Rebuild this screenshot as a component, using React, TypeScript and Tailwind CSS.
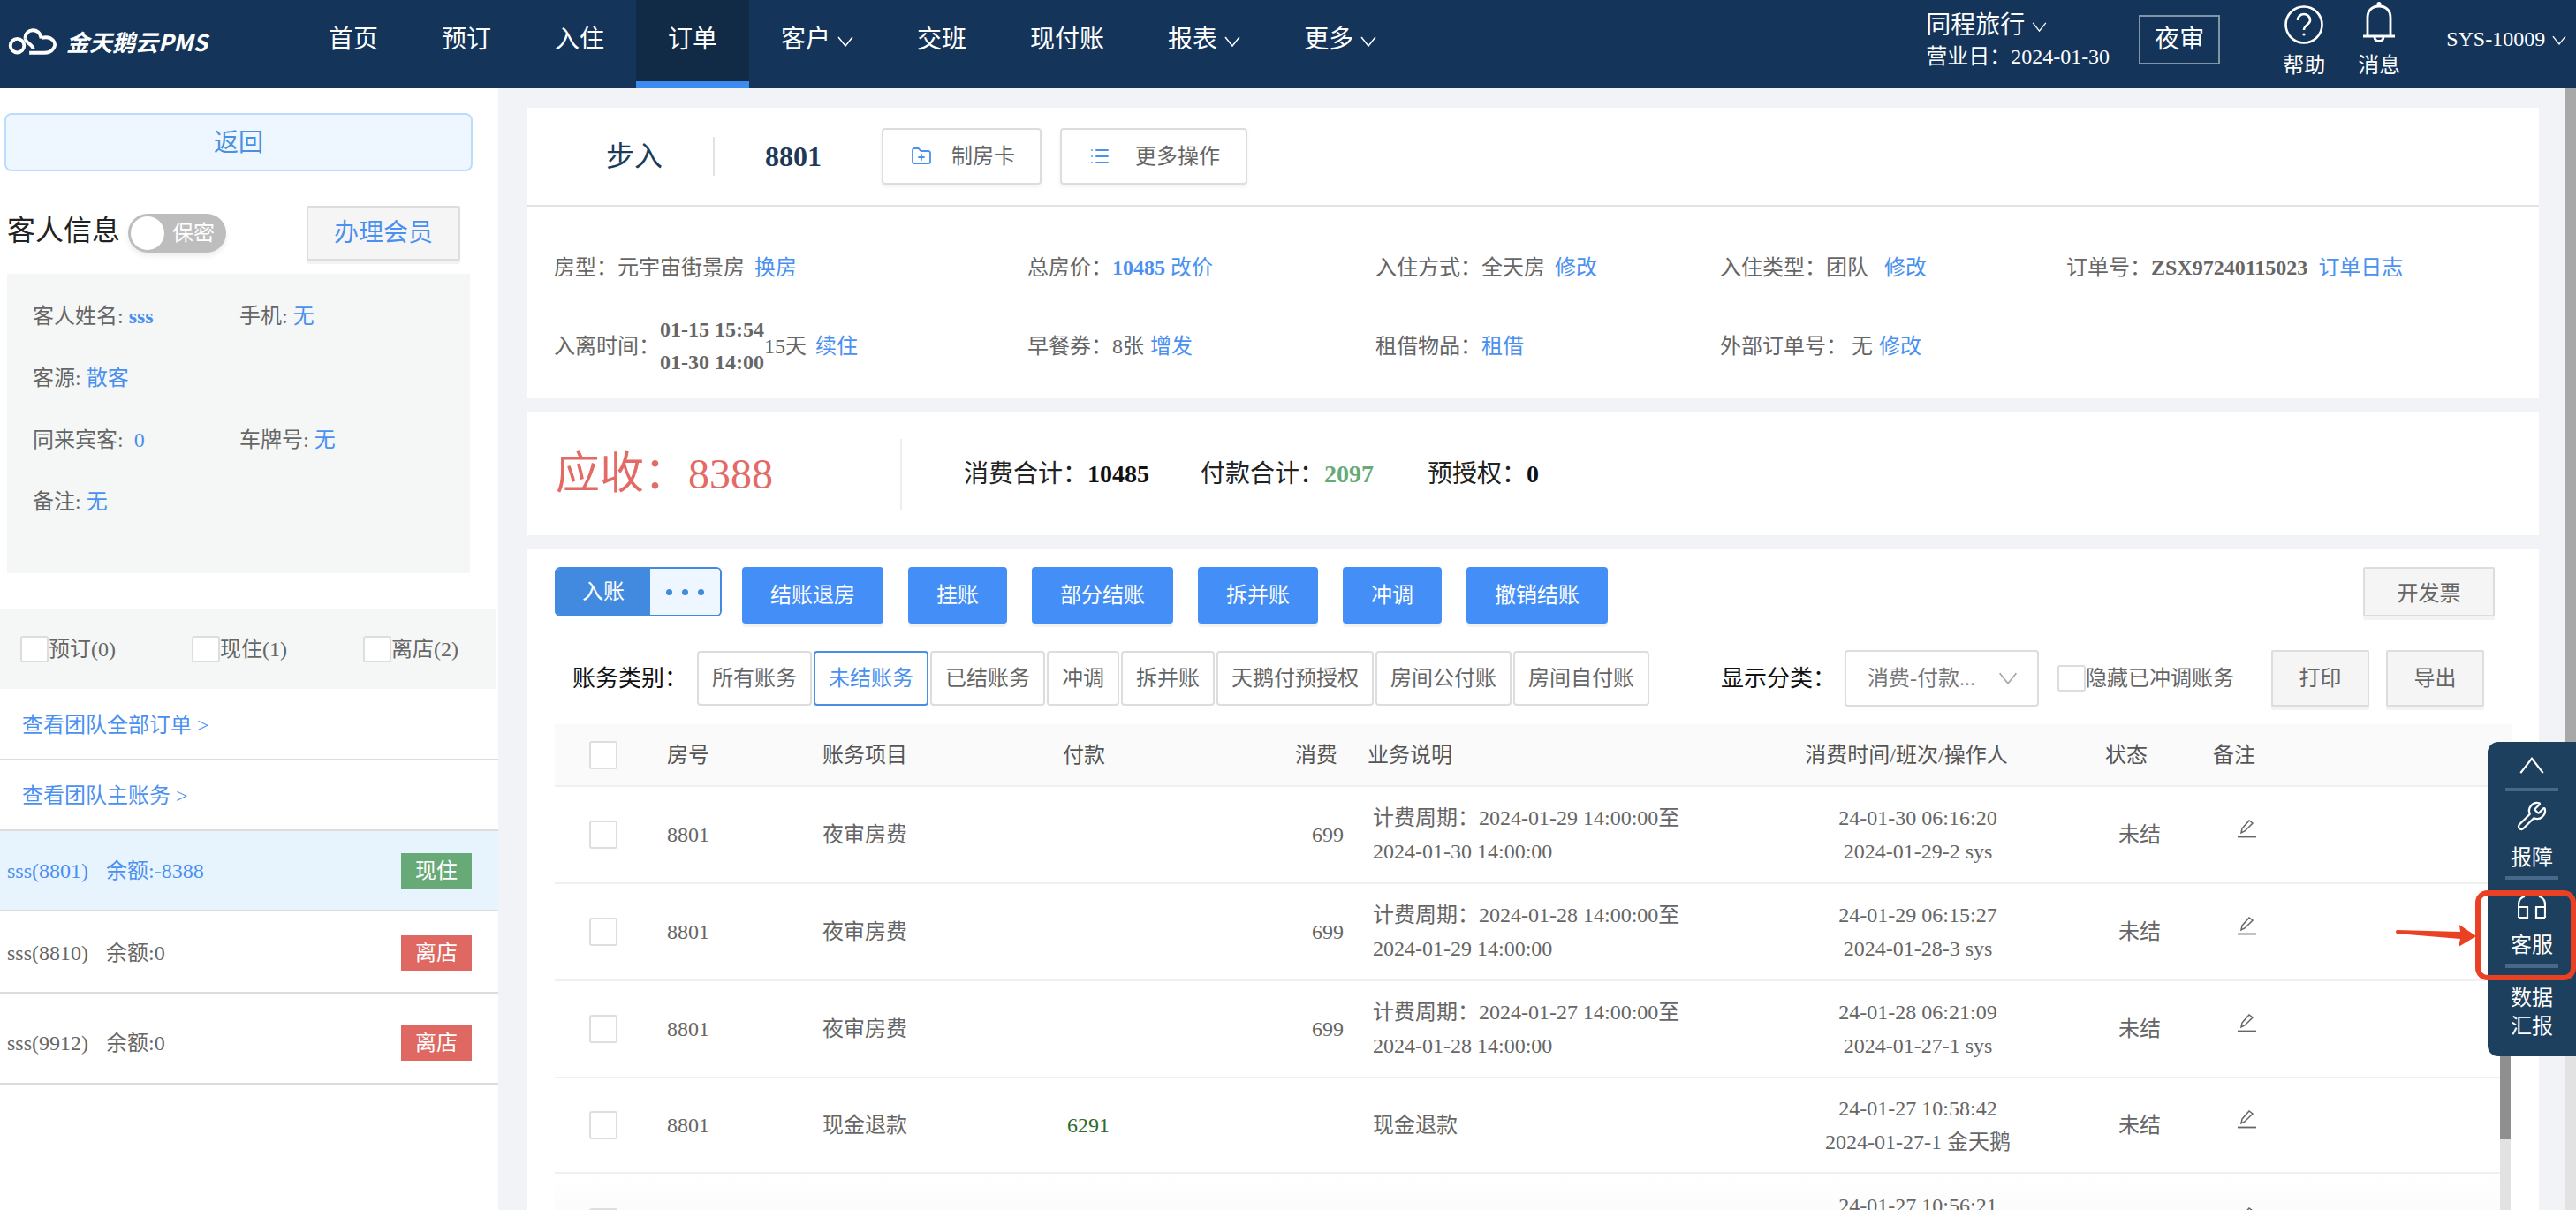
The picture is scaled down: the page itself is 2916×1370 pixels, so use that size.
import { FolderPlus, List, Wrench } from "lucide-react";

const navItems = [
  { label: "首页" },
  { label: "预订" },
  { label: "入住" },
  { label: "订单", active: true },
  { label: "客户", menu: true },
  { label: "交班" },
  { label: "现付账" },
  { label: "报表", menu: true },
  { label: "更多", menu: true },
];

const tabs = ["所有账务", "未结账务", "已结账务", "冲调", "拆并账", "天鹅付预授权", "房间公付账", "房间自付账"];
const actions = ["结账退房", "挂账", "部分结账", "拆并账", "冲调", "撤销结账"];

const rows = [
  { room: "8801", item: "夜审房费", fee: "699", desc: ["计费周期：2024-01-29 14:00:00至", "2024-01-30 14:00:00"], time: ["24-01-30 06:16:20", "2024-01-29-2 sys"], status: "未结" },
  { room: "8801", item: "夜审房费", fee: "699", desc: ["计费周期：2024-01-28 14:00:00至", "2024-01-29 14:00:00"], time: ["24-01-29 06:15:27", "2024-01-28-3 sys"], status: "未结" },
  { room: "8801", item: "夜审房费", fee: "699", desc: ["计费周期：2024-01-27 14:00:00至", "2024-01-28 14:00:00"], time: ["24-01-28 06:21:09", "2024-01-27-1 sys"], status: "未结" },
  { room: "8801", item: "现金退款", pay: "6291", desc: ["现金退款"], time: ["24-01-27 10:58:42", "2024-01-27-1 金天鹅"], status: "未结" },
  // last row is cut by the window, only its first time line shows
  { time: ["24-01-27 10:56:21", "\u00a0"] },
];

const tableCols = "grid grid-cols-[127px_176px_272px_145px_173px_479px_342px_138px_1fr]";

function Chevron({ className }: { className?: string }) {
  return (
    <svg viewBox="0 0 18 12" fill="none" stroke="currentColor" strokeWidth="1.5" className={className}>
      <path d="M1 1l8 10 8-10" />
    </svg>
  );
}

function Logo() {
  return (
    <div className="flex items-center pl-[9px]">
      <svg viewBox="25 25 170 105" fill="none" stroke="white" strokeWidth="12" className="w-[56px] h-[34px]">
        <circle cx="56" cy="95" r="24" />
        <path d="M84 70C82 35 135 28 140 70" />
        <path d="M140 68C178 58 200 88 180 108C172 120 160 120 150 120H98" />
        <path d="M84 70C86 88 112 90 112 108" />
      </svg>
      <span className="ml-[10px] font-['Noto_Sans_CJK_SC',sans-serif] font-bold italic text-[26px] text-white">
        金天鹅云PMS
      </span>
    </div>
  );
}

function Header() {
  return (
    <header className="h-[100px] bg-[#14345a] flex text-white shrink-0">
      <div className="w-[336px] flex items-center pb-[8px]">
        <Logo />
      </div>
      <nav className="flex">
        {navItems.map((n) => (
          <div
            key={n.label}
            className={
              n.active
                ? "h-full px-[36px] flex items-center pb-[2px] bg-[#112b47] border-b-[8px] border-[#3d8af0] text-[28px]"
                : "h-full px-[36px] flex items-center pb-[10px] text-[28px]"
            }
          >
            {n.label}
            {n.menu && <Chevron className="w-[18px] h-[12px] ml-[8px] mt-[4px]" />}
          </div>
        ))}
      </nav>
      <div className="ml-[586px] w-[241px] pt-[11px]">
        <div className="flex items-center text-[28px] leading-[36px]">
          同程旅行
          <Chevron className="w-[17px] h-[11px] ml-[8px] mt-[2px]" />
        </div>
        <div className="text-[24px] leading-[32px] mt-[1px]">营业日：2024-01-30</div>
      </div>
      <div className="mt-[17px] w-[92px] h-[56px] border-2 border-[#8094aa] flex items-center justify-center text-[28px]">
        夜审
      </div>
      <div className="ml-[63px] w-[64px] flex flex-col items-center pt-[6px]">
        <svg viewBox="0 0 44 44" fill="none" stroke="white" strokeWidth="2.6" className="w-[44px] h-[44px]">
          <circle cx="22" cy="22" r="20.5" />
          <path d="M15 17c0-4 3-7 7-7s7 3 7 7c0 5-7 5-7 11" />
          <circle cx="22" cy="33" r="1.6" fill="white" stroke="none" />
        </svg>
        <span className="text-[24px] leading-[30px] mt-[9px]">帮助</span>
      </div>
      <div className="ml-[21px] w-[64px] flex flex-col items-center pt-[1px]">
        <svg viewBox="0 0 36 48" fill="none" stroke="white" strokeWidth="2.8" className="w-[36px] h-[48px]">
          <path d="M5 39V19C5 10 11 6 18 6C25 6 31 10 31 19V39" />
          <path d="M0 40H36" />
          <path d="M13 41C13 47 23 47 23 41" />
          <circle cx="18" cy="3.5" r="2.6" fill="white" stroke="none" />
        </svg>
        <span className="text-[24px] leading-[30px] mt-[10px]">消息</span>
      </div>
      <div className="ml-[44px] flex items-center text-[24px] h-[88px]">
        SYS-10009
        <Chevron className="w-[16px] h-[11px] ml-[8px] mt-[2px]" />
      </div>
    </header>
  );
}

function Sidebar() {
  return (
    <aside className="w-[564px] bg-white shrink-0 text-[24px] text-[#666]">
      <div className="mt-[28px] mx-[5px] w-[530px] h-[66px] rounded-[8px] bg-[#eef7ff] border-2 border-[#bcdcfb] flex items-center justify-center pt-[2px] text-[28px] text-[#4a90e2]">
        返回
      </div>

      <div className="mt-[38px] pl-[8px] h-[64px] flex items-center">
        <span className="text-[32px] text-[#222] w-[128px] -mt-[6px]">客人信息</span>
        <div className="ml-[9px] w-[111px] h-[44px] rounded-full bg-[#bdbdbd] flex items-center pl-[3px] shadow-[0_4px_6px_#eeeeee]">
          <span className="w-[38px] h-[38px] rounded-full bg-white" />
          <span className="ml-[9px] text-white">保密</span>
        </div>
        <div className="ml-[91px] w-[174px] h-[62px] bg-[#f5f5f5] border-2 border-[#dddddd] rounded-[2px] shadow-[0_4px_0_#f3f3f3] flex items-center justify-center text-[28px] text-[#4a90f0]">
          办理会员
        </div>
      </div>

      <div className="mt-[14px] ml-[8px] w-[524px] h-[339px] bg-[#f5f7f7] pt-[13px] pl-[29px] grid grid-cols-[234px_1fr] auto-rows-[70px] items-center">
        <div>
          客人姓名: <b className="font-bold text-[#4a90f0]">sss</b>
        </div>
        <div>
          手机: <span className="text-[#4a90f0]">无</span>
        </div>
        <div className="col-span-2">
          客源: <span className="text-[#4a90f0]">散客</span>
        </div>
        <div>
          同来宾客:<span className="text-[#4a90f0] ml-[12px]">0</span>
        </div>
        <div>
          车牌号: <span className="text-[#4a90f0]">无</span>
        </div>
        <div className="col-span-2">
          备注: <span className="text-[#4a90f0]">无</span>
        </div>
      </div>

      <div className="mt-[40px] w-[562px] h-[91px] bg-[#f5f7f7] pl-[23px] grid grid-cols-[194px_194px_1fr] items-center">
        {["预订(0)", "现住(1)", "离店(2)"].map((s) => (
          <label key={s} className="flex items-center">
            <span className="w-[32px] h-[30px] bg-white border-2 border-[#dddddd] rounded-[3px]" />
            {s}
          </label>
        ))}
      </div>

      <div className="h-[81px] pl-[25px] pt-[2px] flex items-center border-b-2 border-[#dddddd] text-[#4a90f0]">查看团队全部订单 &gt;</div>
      <div className="h-[80px] pl-[25px] pt-[2px] flex items-center border-b-2 border-[#dddddd] text-[#4a90f0]">查看团队主账务 &gt;</div>

      <div className="h-[91px] pl-[8px] pr-[30px] flex items-center border-b-2 border-[#dddddd] bg-[#e8f4fd] text-[#4a90f0]">
        <span className="w-[112px]">sss(8801)</span>
        余额:-8388
        <span className="ml-auto w-[80px] h-[40px] bg-[#68a978] text-white flex items-center justify-center">现住</span>
      </div>
      <div className="h-[93px] pl-[8px] pr-[30px] pt-[2px] flex items-center border-b-2 border-[#dddddd]">
        <span className="w-[112px]">sss(8810)</span>
        余额:0
        <span className="ml-auto w-[80px] h-[40px] bg-[#e06862] text-white flex items-center justify-center">离店</span>
      </div>
      <div className="h-[103px] pl-[8px] pr-[30px] pt-[10px] flex items-center border-b-2 border-[#dddddd]">
        <span className="w-[112px]">sss(9912)</span>
        余额:0
        <span className="ml-auto w-[80px] h-[40px] bg-[#e06862] text-white flex items-center justify-center">离店</span>
      </div>
    </aside>
  );
}

function Link({ children, className }: { children: string; className?: string }) {
  return <span className={`text-[#4a90f0] ${className ?? ""}`}>{children}</span>;
}

function OrderCard() {
  return (
    <section className="h-[329px] bg-white shrink-0">
      <div className="h-[110px] flex items-center border-b-2 border-[#e3e3e3] box-content">
        <span className="ml-[90px] w-[121px] text-[32px] text-[#1b3a5c]">步入</span>
        <span className="w-[2px] h-[44px] bg-[#e3e3e3]" />
        <span className="ml-[57px] w-[132px] text-[32px] font-bold text-[#1b3a5c]">8801</span>
        <div className="w-[181px] h-[64px] border-2 border-[#dddddd] rounded-[4px] shadow-[0_3px_4px_#f3f3f3] flex items-center pl-[31px] text-[24px] text-[#666]">
          <FolderPlus className="w-[24px] h-[24px] text-[#4a90f0]" strokeWidth={1.8} />
          <span className="ml-[22px]">制房卡</span>
        </div>
        <div className="ml-[21px] w-[212px] h-[64px] border-2 border-[#dddddd] rounded-[4px] shadow-[0_3px_4px_#f3f3f3] flex items-center pl-[31px] text-[24px] text-[#666]">
          <List className="w-[24px] h-[24px] text-[#4a90f0]" strokeWidth={1.8} />
          <span className="ml-[28px]">更多操作</span>
        </div>
      </div>
      <div className="pt-[24px] pl-[31px] grid grid-cols-[536px_394px_390px_392px_1fr] auto-rows-[89px] items-center text-[24px] text-[#666]">
        <div>
          房型：元宇宙街景房<Link className="ml-[11px]">换房</Link>
        </div>
        <div>
          总房价：<b className="font-bold text-[#4a90f0]">10485</b>
          <Link className="ml-[6px]">改价</Link>
        </div>
        <div>
          入住方式：全天房<Link className="ml-[11px]">修改</Link>
        </div>
        <div>
          入住类型：团队<Link className="ml-[18px]">修改</Link>
        </div>
        <div>
          订单号：<b className="font-bold">ZSX97240115023</b>
          <Link className="ml-[12px]">订单日志</Link>
        </div>
        <div className="flex items-center">
          入离时间：
          <div className="font-bold leading-[37px]">
            <div>01-15 15:54</div>
            <div>01-30 14:00</div>
          </div>
          15天
          <Link className="ml-[10px]">续住</Link>
        </div>
        <div>
          早餐券：8张<Link className="ml-[7px]">增发</Link>
        </div>
        <div>
          租借物品：<Link>租借</Link>
        </div>
        <div>
          外部订单号：<span className="ml-[5px]">无</span>
          <Link className="ml-[7px]">修改</Link>
        </div>
      </div>
    </section>
  );
}

function SummaryCard() {
  return (
    <section className="mt-[16px] h-[139px] bg-white shrink-0 flex items-center pl-[33px] text-[28px] text-[#222]">
      <div className="w-[390px] text-[50px] text-[#e46a66]">
        应收：<span className="text-[48px]">8388</span>
      </div>
      <span className="w-[2px] h-[80px] bg-[#eeeeee]" />
      <div className="ml-[70px] w-[268px]">
        消费合计：<b className="font-bold text-[#111]">10485</b>
      </div>
      <div className="w-[257px]">
        付款合计：<b className="font-bold text-[#67aa78]">2097</b>
      </div>
      <div>
        预授权：<b className="font-bold text-[#111]">0</b>
      </div>
    </section>
  );
}

function Pencil() {
  return (
    <svg viewBox="0 0 22 22" fill="none" stroke="#666" strokeWidth="1.5" className="w-[22px] h-[22px]">
      <path d="M5 16l1-5 8-9 4 3-9 9z" />
      <path d="M1 20.5H22" strokeWidth="1.8" />
    </svg>
  );
}

function RowCheck() {
  return <span className="block w-[32px] h-[32px] bg-white border-2 border-[#dedede] rounded-[3px]" />;
}

function LedgerTable() {
  return (
    <div className="mt-[20px] w-[2215px] flex-1 min-h-0 flex flex-col text-[24px] text-[#666]">
      <div className={`${tableCols} h-[71px] shrink-0 items-center bg-[#fafafa] border-b-2 border-[#f0f0f0] text-[#555]`}>
        <div className="pl-[39px]">
          <RowCheck />
        </div>
        <div>房号</div>
        <div>账务项目</div>
        <div>付款</div>
        <div className="text-right pr-[7px]">消费</div>
        <div className="pl-[27px]">业务说明</div>
        <div className="text-center pr-[26px]">消费时间/班次/操作人</div>
        <div className="pl-[41px]">状态</div>
        <div className="pl-[25px]">备注</div>
      </div>
      <div className="flex-1 min-h-0 flex">
        <div className="w-[2202px] overflow-hidden">
          {rows.map((r, i) => (
            <div
              key={i}
              className={
                i === 4
                  ? `${tableCols} h-[110px] items-center bg-gradient-to-b from-white to-[#f7f7f7]`
                  : i === 3
                    ? `${tableCols} h-[108px] items-center border-b-2 border-[#f0f0f0]`
                    : `${tableCols} h-[110px] items-center border-b-2 border-[#f0f0f0]`
              }
            >
              <div className="pl-[39px]">
                <RowCheck />
              </div>
              <div>{r.room}</div>
              <div>{r.item}</div>
              <div className="pl-[5px] text-[#2e6b2e]">{r.pay}</div>
              <div className="text-right">{r.fee}</div>
              <div className="pl-[33px] leading-[38px]">
                {r.desc?.map((d) => (
                  <div key={d}>{d}</div>
                ))}
              </div>
              <div className="text-center leading-[38px]">
                {r.time.map((t) => (
                  <div key={t}>{t}</div>
                ))}
              </div>
              <div className="pl-[56px]">{r.status}</div>
              <div className="pl-[52px] pb-[14px]">
                <Pencil />
              </div>
            </div>
          ))}
        </div>
        <div className="w-[12px] bg-[#e2e2e2] shrink-0">
          <div className="h-[399px] bg-[#8f8f8f]" />
        </div>
      </div>
    </div>
  );
}

function LedgerCard() {
  return (
    <section className="mt-[16px] flex-1 min-h-0 bg-white pt-[20px] pl-[32px] flex flex-col text-[24px]">
      <div className="flex items-start h-[64px] shrink-0 gap-[28px]">
        <div className="-mr-[5px] w-[189px] h-[56px] flex rounded-[6px] overflow-hidden border-2 border-[#418ae0]">
          <span className="w-[106px] bg-[#418ae0] text-white flex items-center justify-center">入账</span>
          <span className="flex-1 bg-[#eef7ff] flex items-center justify-center gap-[11px]">
            <i className="w-[7px] h-[7px] rounded-full bg-[#418ae0]" />
            <i className="w-[7px] h-[7px] rounded-full bg-[#418ae0]" />
            <i className="w-[7px] h-[7px] rounded-full bg-[#418ae0]" />
          </span>
        </div>
        {actions.map((a) => (
          <div key={a} className="h-[64px] px-[32px] bg-[#448ef7] text-white rounded-[4px] shadow-[0_4px_0_#f3f3f3] flex items-center">
            {a}
          </div>
        ))}
        <div className="ml-auto mr-[50px] w-[149px] h-[56px] pt-[4px] bg-[#f5f5f5] border-2 border-[#dddddd] rounded-[2px] shadow-[0_4px_0_#f3f3f3] flex items-center justify-center text-[#666]">
          开发票
        </div>
      </div>

      <div className="mt-[30px] pl-[20px] h-[64px] shrink-0 flex items-center">
        <span className="w-[130px] text-[26px] text-[#111]">账务类别：</span>
        <div className="ml-[11px] flex gap-[2px] h-[62px]">
          {tabs.map((t) => (
            <div
              key={t}
              className={
                t === "未结账务"
                  ? "px-[15px] border-2 border-[#4a90e2] rounded-[4px] flex items-center text-[#4a90f0]"
                  : "px-[15px] border-2 border-[#dddddd] rounded-[4px] flex items-center text-[#666]"
              }
            >
              {t}
            </div>
          ))}
        </div>
        <span className="ml-[81px] w-[130px] text-[26px] text-[#111]">显示分类：</span>
        <div className="ml-[10px] w-[220px] h-[64px] border-2 border-[#dddddd] rounded-[4px] flex items-center pl-[24px] text-[#777]">
          消费-付款...
          <Chevron className="w-[22px] h-[14px] ml-auto mr-[22px] text-[#aaaaaa]" />
        </div>
        <span className="ml-[21px] w-[32px] h-[30px] border-2 border-[#dddddd] rounded-[3px]" />
        <span className="text-[#666]">隐藏已冲调账务</span>
        <div className="ml-[42px] w-[111px] h-[64px] bg-[#f5f5f5] border-2 border-[#dddddd] rounded-[2px] shadow-[0_4px_0_#f3f3f3] flex items-center justify-center text-[#666]">
          打印
        </div>
        <div className="ml-[19px] w-[111px] h-[64px] bg-[#f5f5f5] border-2 border-[#dddddd] rounded-[2px] shadow-[0_4px_0_#f3f3f3] flex items-center justify-center text-[#666]">
          导出
        </div>
      </div>

      <LedgerTable />
    </section>
  );
}

function FloatingPanel() {
  return (
    <div className="absolute right-0 top-[840px] w-[100px] h-[356px] bg-[#1c405e] rounded-l-[12px] flex flex-col items-center text-white text-[24px]">
      <div className="h-[52px] flex items-center">
        <svg viewBox="0 0 32 22" fill="none" stroke="white" strokeWidth="2.4" className="w-[30px] h-[20px]">
          <path d="M2 21L16 3l14 18" />
        </svg>
      </div>
      <span className="w-[60px] h-[4px] bg-[#48688a]" />
      <div className="h-[96px] flex flex-col items-center pt-[10px]">
        <Wrench className="w-[36px] h-[36px]" strokeWidth={1.5} />
        <span className="mt-[12px] leading-[34px]">报障</span>
      </div>
      <span className="w-[60px] h-[4px] bg-[#48688a]" />
      <div className="h-[96px] flex flex-col items-center pt-[18px]">
        <svg viewBox="0 0 32 26" fill="none" stroke="white" strokeWidth="2.2" className="w-[32px] h-[26px]">
          <path d="M1 25V10Q1 3 8 1" />
          <path d="M1 13H11V25H1" />
          <path d="M31 25V10Q31 3 24 1" />
          <path d="M31 13H21V25H31" />
        </svg>
        <span className="mt-[13px] leading-[34px]">客服</span>
      </div>
      <span className="w-[60px] h-[4px] bg-[#48688a]" />
      <div className="pt-[18px] leading-[32px] text-center">
        <div>数据</div>
        <div>汇报</div>
      </div>
    </div>
  );
}

function Annotation() {
  return (
    <>
      <div className="absolute left-[2802px] top-[1008px] w-[114px] h-[102px] border-[6px] border-[#ea4125] rounded-[14px]" />
      <svg viewBox="0 0 92 26" className="absolute left-[2711px] top-[1046px] w-[92px] h-[26px]" fill="#ea4125">
        <path d="M2 7L74 9L73 1L92 14L72 26L74 17L2 11Q0 9 2 7Z" />
      </svg>
    </>
  );
}

export default function App() {
  return (
    <div className="relative w-[2916px] h-[1370px] overflow-hidden flex flex-col bg-[#f1f3f7] font-['Liberation_Serif','Noto_Sans_CJK_SC',serif]">
      <Header />
      <div className="flex-1 min-h-0 flex">
        <Sidebar />
        <main className="flex-1 min-w-0 pl-[32px] pr-[30px] pt-[22px] flex flex-col">
          <OrderCard />
          <SummaryCard />
          <LedgerCard />
        </main>
        <div className="w-[12px] shrink-0 bg-[#e2e2e2]">
          <div className="h-[900px] bg-[#a8a8a8]" />
        </div>
      </div>
      <FloatingPanel />
      <Annotation />
    </div>
  );
}
